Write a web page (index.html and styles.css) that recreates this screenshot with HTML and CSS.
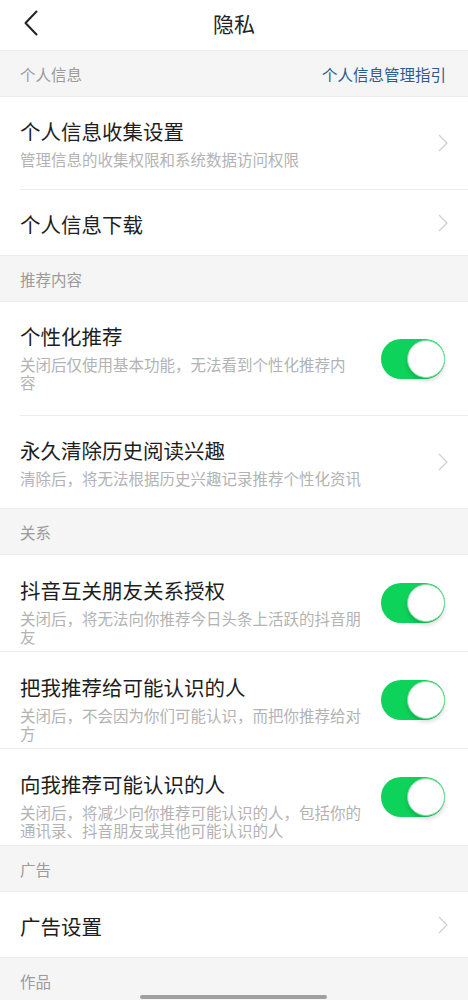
FILE: index.html
```html
<!DOCTYPE html>
<html lang="zh-CN">
<head>
    <meta charset="UTF-8">
    <meta name="viewport" content="width=device-width, initial-scale=1.0">
    <title>隐私</title>
    <link rel="stylesheet" href="styles.css">
</head>
<body>
    <div class="page">
        <!-- Top bar -->
        <div class="nav">
            <svg class="nav-back" width="14" height="26" viewBox="0 0 14 26">
                <polyline points="12.5,1.5 1.5,13 12.5,24.5" fill="none" stroke="#222" stroke-width="2" stroke-linecap="round" stroke-linejoin="round"/>
            </svg>
            <div class="nav-title">隐私</div>
        </div>

        <div class="section-head">
            <span>个人信息</span>
            <a class="section-link">个人信息管理指引</a>
        </div>
        <div class="row row--line">
            <div class="row-text">
                <div class="row-title">个人信息收集设置</div>
                <div class="row-sub">管理信息的收集权限和系统数据访问权限</div>
            </div>
            <svg class="chevron" width="10" height="18" viewBox="0 0 10 18"><polyline points="1,1 9,9 1,17" fill="none" stroke="#cfcfcf" stroke-width="1.2"/></svg>
        </div>
        <div class="row row--single">
            <div class="row-text">
                <div class="row-title">个人信息下载</div>
            </div>
            <svg class="chevron" width="10" height="18" viewBox="0 0 10 18"><polyline points="1,1 9,9 1,17" fill="none" stroke="#cfcfcf" stroke-width="1.2"/></svg>
        </div>

        <div class="section-head"><span>推荐内容</span></div>
        <div class="row row--line row--roomy">
            <div class="row-text row-text--narrow">
                <div class="row-title">个性化推荐</div>
                <div class="row-sub">关闭后仅使用基本功能，无法看到个性化推荐内容</div>
            </div>
            <div class="toggle"><div class="knob"></div></div>
        </div>
        <div class="row">
            <div class="row-text">
                <div class="row-title">永久清除历史阅读兴趣</div>
                <div class="row-sub">清除后，将无法根据历史兴趣记录推荐个性化资讯</div>
            </div>
            <svg class="chevron" width="10" height="18" viewBox="0 0 10 18"><polyline points="1,1 9,9 1,17" fill="none" stroke="#cfcfcf" stroke-width="1.2"/></svg>
        </div>

        <div class="section-head"><span>关系</span></div>
        <div class="row row--tight row--full-line">
            <div class="row-text">
                <div class="row-title">抖音互关朋友关系授权</div>
                <div class="row-sub">关闭后，将无法向你推荐今日头条上活跃的抖音朋友</div>
            </div>
            <div class="toggle"><div class="knob"></div></div>
        </div>
        <div class="row row--tight row--full-line">
            <div class="row-text">
                <div class="row-title">把我推荐给可能认识的人</div>
                <div class="row-sub">关闭后，不会因为你们可能认识，而把你推荐给对方</div>
            </div>
            <div class="toggle"><div class="knob"></div></div>
        </div>
        <div class="row row--tight">
            <div class="row-text">
                <div class="row-title">向我推荐可能认识的人</div>
                <div class="row-sub">关闭后，将减少向你推荐可能认识的人，包括你的通讯录、抖音朋友或其他可能认识的人</div>
            </div>
            <div class="toggle"><div class="knob"></div></div>
        </div>

        <div class="section-head"><span>广告</span></div>
        <div class="row row--single">
            <div class="row-text">
                <div class="row-title">广告设置</div>
            </div>
            <svg class="chevron" width="10" height="18" viewBox="0 0 10 18"><polyline points="1,1 9,9 1,17" fill="none" stroke="#cfcfcf" stroke-width="1.2"/></svg>
        </div>

        <div class="section-head"><span>作品</span></div>
    </div>

    <div class="home-bar"></div>
</body>
</html>
```

FILE: styles.css
```css
body {
    margin: 0;
    padding: 0;
    background: #fff;
    font-family: "Noto Sans CJK SC", "Noto Sans", sans-serif;
    color: #222;
    height: 1000px;
    overflow: hidden;
}
.page {
    display: flex;
    flex-direction: column;
}
.nav {
    height: 50px;
    display: flex;
    align-items: center;
    justify-content: center;
    position: relative;
}
.nav-back {
    position: absolute;
    left: 24px;
    top: 10px;
}
.nav-title {
    font-size: 21px;
    line-height: 26px;
    margin-top: -5px;
    color: #222;
}
.section-head {
    height: 45px;
    display: flex;
    align-items: center;
    justify-content: space-between;
    padding: 0 22px 0 20px;
    background: #f5f5f5;
    border-top: 1px solid #ececec;
    border-bottom: 1px solid #ececec;
    font-size: 15.5px;
    color: #9b9b9b;
}
.section-link {
    color: #2c5b8f;
}
.row {
    display: flex;
    padding: 0 20px;
    position: relative;
}
.row-text {
    flex: 1;
    padding: 21px 0 21px;
    max-width: 350px;
}
.row-text--narrow {
    max-width: 335px;
}
.row--single .row-text {
    padding-bottom: 18px;
}
.row--roomy .row-text {
    padding-bottom: 24px;
}
.row--tight .row-text {
    padding-top: 22px;
    padding-bottom: 6px;
}
.row-title {
    font-size: 20.5px;
    line-height: 26px;
    color: #1e1e1e;
}
.row-sub {
    margin-top: 6px;
    font-size: 15.5px;
    line-height: 18px;
    color: #b3b3b3;
}
.row--line {
    border-bottom: 1px solid #ededed;
    margin-left: 20px;
    padding-left: 0;
}
.row--full-line {
    border-bottom: 1px solid #ededed;
}
.chevron {
    align-self: center;
    margin-left: auto;
}
.toggle {
    align-self: center;
    margin-left: auto;
    margin-right: 3px;
    width: 64px;
    height: 40px;
    border-radius: 20px;
    background: #0ed35a;
    position: relative;
}
.knob {
    position: absolute;
    right: 0;
    top: 1px;
    width: 36px;
    height: 36px;
    border-radius: 50%;
    background: #fff;
    border: 1px solid #7fdf9f;
    box-shadow: 0 3px 4px rgba(0, 0, 0, 0.15);
}
.home-bar {
    position: absolute;
    left: 140px;
    top: 995px;
    width: 187px;
    height: 4px;
    border-radius: 2px;
    background: #a0a0a0;
}
```
